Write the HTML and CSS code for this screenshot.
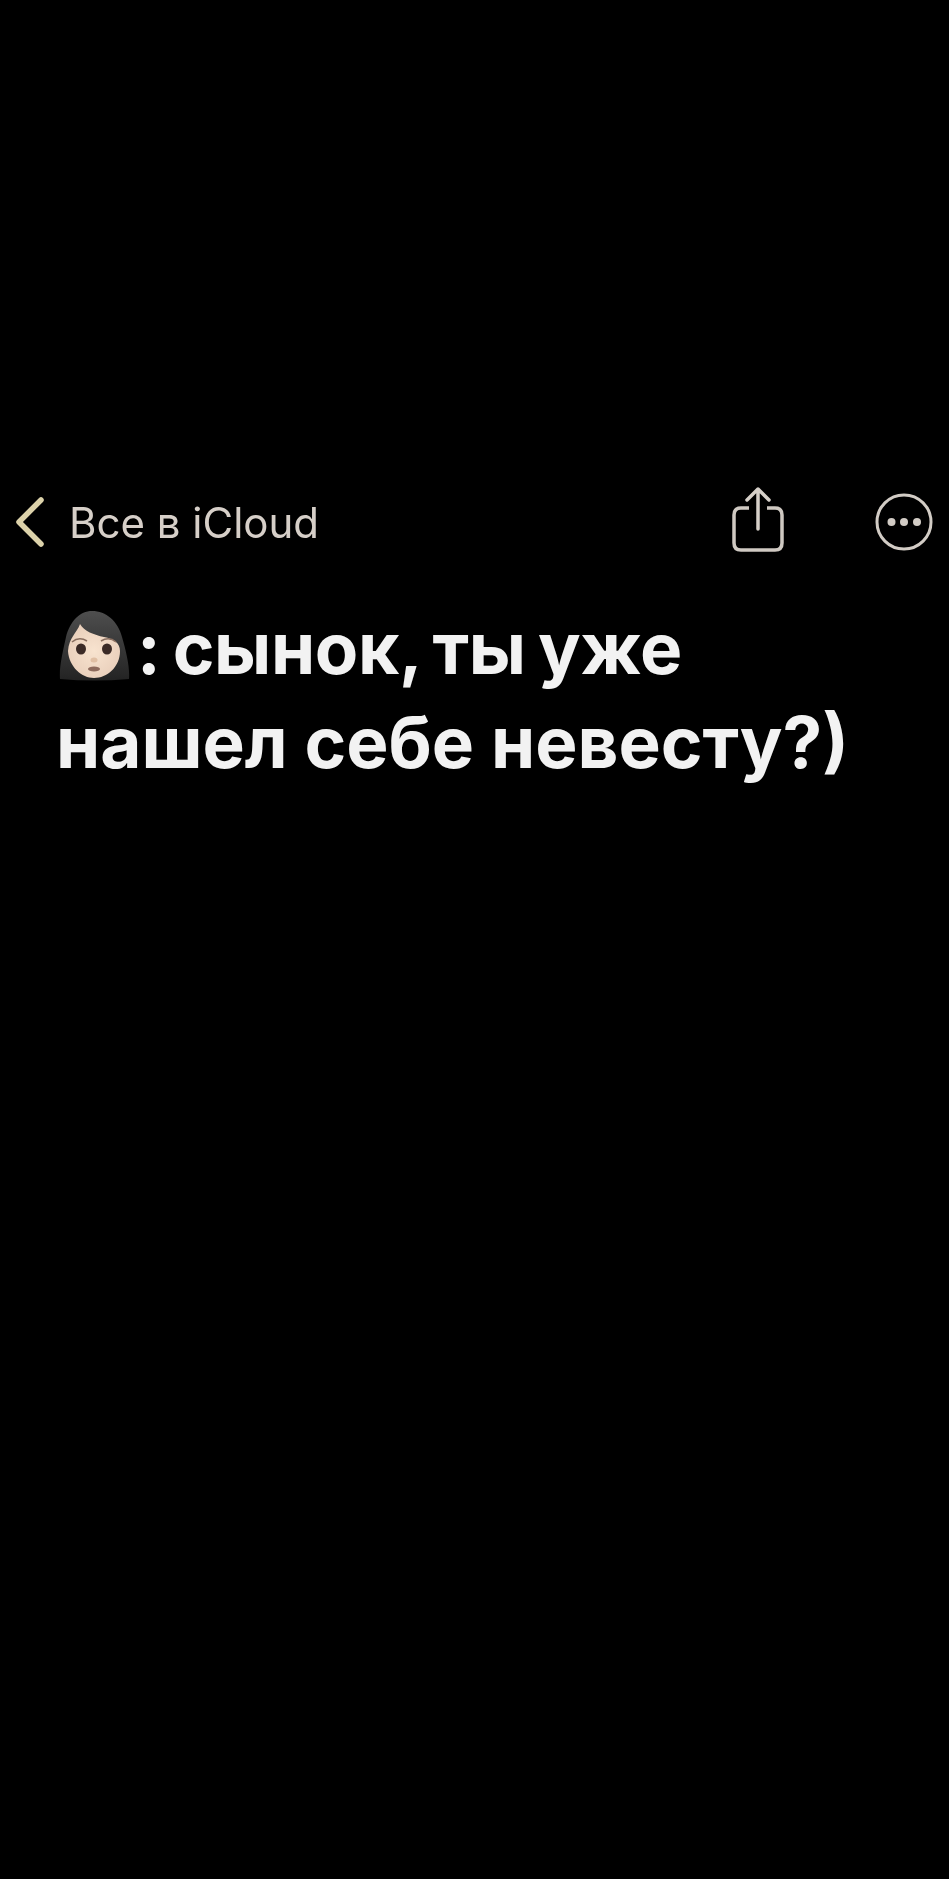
FILE: index.html
```html
<!DOCTYPE html>
<html lang="ru">
<head>
    <meta charset="UTF-8">
    <meta name="viewport" content="width=device-width, initial-scale=1.0">
    <title>Заметка</title>
    <link rel="stylesheet" href="styles.css">
</head>
<body>
<div class="screen">
    <div class="toolbar">
        <svg class="back-icon" width="32" height="56" viewBox="0 0 32 56">
            <path d="M27 6 L5 28 L27 50" fill="none" stroke="#dcd2aa" stroke-width="5.500" stroke-linecap="round" stroke-linejoin="round"/>
        </svg>
        <span class="back-label">Все в iCloud</span>
        <svg class="share-icon" width="52" height="66" viewBox="0 0 52 66">
            <path d="M17 22 H9 Q2 22 2 29 V57 Q2 64 9 64 H43 Q50 64 50 57 V29 Q50 22 43 22 H35" fill="none" stroke="#cfc9c2" stroke-width="3.500"/>
            <path d="M26 43 V3 M15 14 L26 3 L37 14" fill="none" stroke="#d6d0c9" stroke-width="3.500" stroke-linecap="round" stroke-linejoin="round"/>
        </svg>
        <svg class="more-icon" width="60" height="60" viewBox="0 0 60 60">
            <circle cx="30" cy="30" r="27" fill="none" stroke="#d2ccc5" stroke-width="3"/>
            <circle cx="17.500" cy="30" r="4" fill="#d2ccc5"/>
            <circle cx="30" cy="30" r="4" fill="#d2ccc5"/>
            <circle cx="43" cy="30" r="4" fill="#d2ccc5"/>
        </svg>
    </div>

    <div class="note">
        <svg class="emoji" width="76" height="72" viewBox="0 0 76 72">
            <defs>
                <radialGradient id="skin" cx="50%" cy="50%" r="55%">
                    <stop offset="0%" stop-color="#f8e3cf"/>
                    <stop offset="100%" stop-color="#e9cfbb"/>
                </radialGradient>
                <linearGradient id="hair" x1="0" y1="0" x2="0" y2="1">
                    <stop offset="0%" stop-color="#4e4e4e"/>
                    <stop offset="100%" stop-color="#232323"/>
                </linearGradient>
            </defs>
            <path d="M36 2 C24 2 14 12 10 28 C7 42 3 58 4 70 Q38 73 73 70 C74 58 70 42 66 28 C62 12 50 2 36 2 Z" fill="url(#hair)"/>
            <path d="M24 15 C21 24 13 28 12 42 C13 58 26 69 38 69 C51 69 64 58 64 42 C64 34 58 30 48 28 C38 26 28 22 24 15 Z" fill="url(#skin)"/>
            <path d="M16 33 Q23 27 31 32 M45 32 Q53 27 60 33" fill="none" stroke="#8a6f60" stroke-width="1.600"/>
            <ellipse cx="25" cy="40" rx="5" ry="5.500" fill="#3b2a26"/>
            <ellipse cx="51" cy="40" rx="5" ry="5.500" fill="#3b2a26"/>
            <ellipse cx="38" cy="51" rx="3.500" ry="2.500" fill="#e0bfa4"/>
            <ellipse cx="38" cy="60" rx="6" ry="2.500" fill="#8d6a5c"/>
        </svg><span class="note-first">: сынок, ты уже</span><br>нашел себе невесту?)
    </div>
</div>
</body>
</html>
```

FILE: styles.css
```css
html, body {
    margin: 0;
    background-color: #000000;
}
.screen {
    height: 1879px;
    box-sizing: border-box;
    padding-top: 488px;
    overflow: hidden;
    filter: blur(0.6px);
}
.toolbar {
    display: flex;
    align-items: center;
    height: 68px;
    padding: 0 15px 0 14px;
}
.back-icon {
    flex: none;
}
.back-label {
    margin-left: 23px;
    font-family: Inter, "Liberation Sans", sans-serif;
    font-size: 42px;
    color: #d6cfc8;
}
.share-icon {
    flex: none;
    margin-left: auto;
    margin-right: 90px;
    margin-bottom: 6px;
}
.more-icon {
    flex: none;
}
.note {
    margin-top: 45px;
    padding-left: 56px;
    font-family: Inter, "Liberation Sans", sans-serif;
    font-size: 71px;
    font-weight: 700;
    line-height: 94px;
    color: #f2f2f2;
    white-space: nowrap;
}
.emoji {
    vertical-align: -7px;
    margin-right: 5px;
}
.note-first {
    letter-spacing: -0.4px;
    word-spacing: -4px;
}
```
